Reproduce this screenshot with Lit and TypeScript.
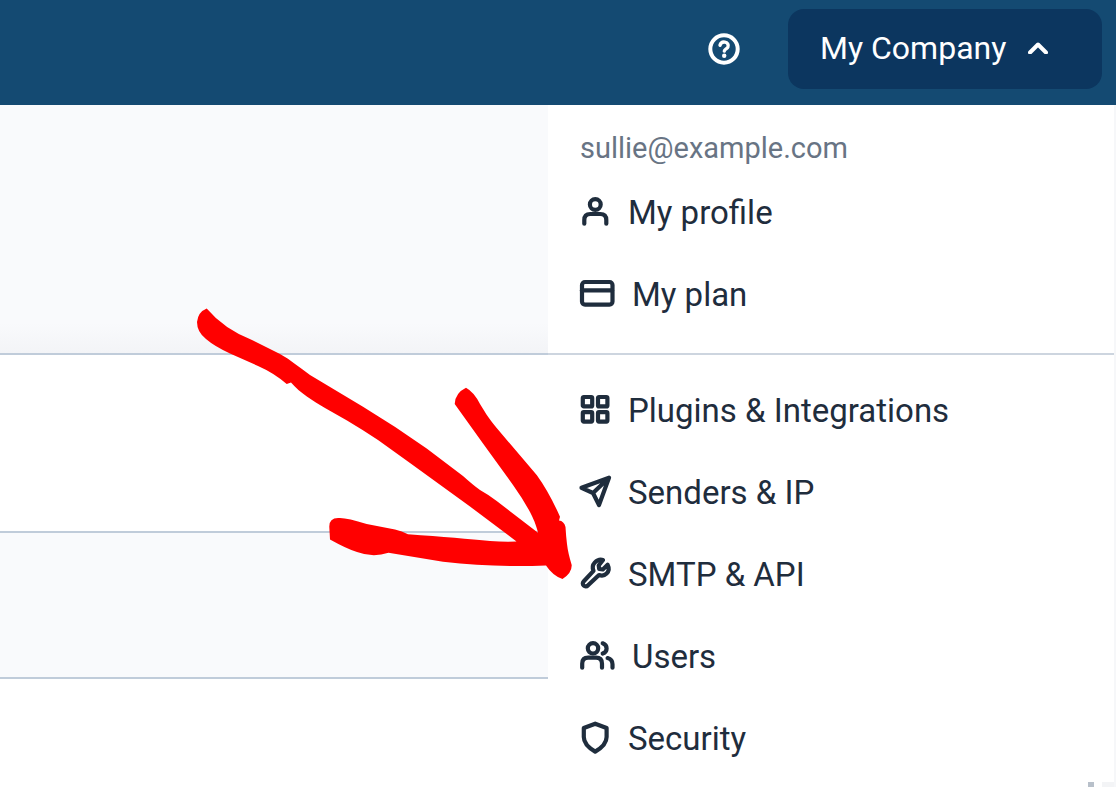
import { LitElement, html, css, svg } from "lit";
import { customElement, property } from "lit/decorators.js";

type IconName = "user" | "card" | "grid" | "send" | "wrench" | "users" | "shield";

const glyphs: Record<IconName, { width: number; shape: unknown }> = {
  user: {
    width: 30,
    shape: svg`<circle cx="15.300" cy="7.500" r="5.400"/><path d="M4.300 26.700v-3.700q0-6 6-6h10q6 0 6 6v3.700"/>`,
  },
  card: {
    width: 34,
    shape: svg`<rect x="2" y="3" width="30.500" height="22.600" rx="3"/><path d="M2 11.300h30"/>`,
  },
  grid: {
    width: 30,
    shape: svg`<rect x="2.800" y="2" width="9.400" height="9.400" rx="1"/><rect x="18" y="2" width="9.400" height="9.400" rx="1"/><rect x="2.800" y="17.200" width="9.400" height="9.400" rx="1"/><rect x="18" y="17.200" width="9.400" height="9.400" rx="1"/>`,
  },
  send: {
    width: 30,
    shape: svg`<path d="M29 .800 1.500 10.800l11.500 5.200 6 12zM29 .800 13 16"/>`,
  },
  wrench: {
    width: 30,
    shape: svg`<path d="m23 1-4.300 5.500.500 3.500 3.600.400 4.800-4.600c1.900 3.800 1.100 6.800-1 8.800-2.300 2.200-5 2.300-7.600 1.400L7.800 26.500a2.800 2.800 0 0 1-4.200-4l9.900-10.600c-1.200-2.900-.900-6 1.200-8.300 2.200-2.300 5-3.500 8.300-2.600z"/>`,
  },
  users: {
    width: 34,
    shape: svg`<circle cx="13" cy="7.300" r="5.200"/><path d="M2.200 26.700v-4q0-6 6-6h7.800q6 0 6 6v4M22.700 2.300q3.900 1.400 3.900 5.100t-3.900 5.100M27.600 17.100q4.900 1.400 4.900 6.200v3.400"/>`,
  },
  shield: {
    width: 30,
    shape: svg`<path d="M15.200 .700 26.600 5v9c0 6.500-5 10.900-11.400 14.600C8.800 24.900 3.800 20.500 3.800 14v-9z"/>`,
  },
};

@customElement("menu-link")
export class MenuLink extends LitElement {
  @property() icon: IconName = "user";
  @property() label = "";

  static styles = css`
    :host {
      display: block;
    }
    .link {
      display: flex;
      align-items: center;
      gap: 18px;
      height: 82px;
      color: #1f2d3d;
      font-size: 33px;
      line-height: 40px;
      text-decoration: none;
      white-space: nowrap;
    }
    .icon {
      flex: none;
      overflow: visible;
      fill: none;
      stroke: currentColor;
      stroke-width: 4.2;
      stroke-linecap: round;
      stroke-linejoin: round;
    }
  `;

  render() {
    const glyph = glyphs[this.icon];
    return html`<a class="link" href="#">
      <svg class="icon" width=${glyph.width} height="32" aria-hidden="true">${glyph.shape}</svg>
      <span>${this.label}</span>
    </a>`;
  }
}

@customElement("app-root")
export class AppRoot extends LitElement {
  static styles = css`
    :host {
      display: flex;
      flex-direction: column;
      position: relative;
      min-height: 100vh;
      overflow: hidden;
      background: #fff;
      font-family: Roboto, sans-serif;
    }
    .bar {
      display: flex;
      align-items: flex-start;
      justify-content: flex-end;
      gap: 48px;
      box-sizing: border-box;
      height: 105px;
      padding: 9px 14px;
      background: #144a72;
    }
    button {
      font: inherit;
      color: #fff;
      border: 0;
      padding: 0;
      background: none;
    }
    .help {
      height: 80px;
      display: flex;
      align-items: center;
    }
    .company {
      display: flex;
      align-items: center;
      justify-content: space-between;
      box-sizing: border-box;
      width: 314px;
      height: 80px;
      padding: 0 54px 2px 32px;
      border-radius: 16px;
      background: #0c365f;
      font-size: 32px;
      line-height: 40px;
    }
    .stroke {
      fill: none;
      stroke: currentColor;
      stroke-width: 4;
      stroke-linecap: round;
      stroke-linejoin: round;
    }
    .hook {
      stroke-width: 3.4;
    }
    .body {
      flex: 1;
      display: grid;
      grid-template-columns: minmax(0, 548fr) minmax(0, 568fr);
    }
    .page {
      display: grid;
      grid-template-rows: 250px 178px 146px 1fr;
    }
    .band {
      border-bottom: 2px solid #c0ccda;
    }
    .tinted {
      background: #f9fafc;
    }
    .shaded {
      background: linear-gradient(#f9fafc 88%, #f3f4f7);
    }
    .menu {
      display: flex;
      flex-direction: column;
      border-right: 2px solid #f6f7f9;
    }
    .group {
      padding: 0 32px;
    }
    .account {
      padding-top: 25px;
      padding-bottom: 17px;
      border-bottom: 2px solid #cdd5df;
    }
    .settings {
      flex: 1;
      padding-top: 15px;
    }
    .email {
      margin: 0;
      padding-bottom: 6px;
      color: #687484;
      font-size: 29px;
      line-height: 36px;
    }
    .edge {
      display: flex;
      justify-content: flex-end;
      gap: 8px;
      height: 5px;
    }
    .mark {
      width: 6px;
      background: #b8c0ca;
    }
    .track {
      width: 12px;
      background: #f3f4f6;
    }
    .arrow {
      position: absolute;
      top: 0;
      left: 0;
      fill: #f00;
      pointer-events: none;
    }
  `;

  render() {
    return html`
      <header class="bar">
        <button class="help" aria-label="Help">
          <svg width="32" height="32" aria-hidden="true">
            <circle class="stroke" cx="16" cy="16" r="13.700" />
            <path class="stroke hook" d="M12 12.300C12.700 9.700 14.700 8.800 16.800 9.100c2.700.400 4.100 2.700 3.100 5-.8 1.800-3.400 2.100-3.600 4" />
            <circle cx="16.200" cy="22.700" r="2.200" fill="currentColor" />
          </svg>
        </button>
        <button class="company" aria-expanded="true">
          <span>My Company</span>
          <svg width="20" height="12" aria-hidden="true"><path class="stroke" d="m2 10.500 8-8 8 8" /></svg>
        </button>
      </header>
      <main class="body">
        <div class="page">
          <div class="band shaded"></div>
          <div class="band"></div>
          <div class="band tinted"></div>
        </div>
        <nav class="menu" aria-label="Account">
          <div class="group account">
            <p class="email">sullie@example.com</p>
            <menu-link icon="user" label="My profile"></menu-link>
            <menu-link icon="card" label="My plan"></menu-link>
          </div>
          <div class="group settings">
            <menu-link icon="grid" label="Plugins &amp; Integrations"></menu-link>
            <menu-link icon="send" label="Senders &amp; IP"></menu-link>
            <menu-link icon="wrench" label="SMTP &amp; API"></menu-link>
            <menu-link icon="users" label="Users"></menu-link>
            <menu-link icon="shield" label="Security"></menu-link>
          </div>
          <div class="edge"><span class="mark"></span><span class="track"></span></div>
        </nav>
      </main>
      <svg class="arrow" width="600" height="600" aria-hidden="true">
        <path d="M206.700 308.500Q224 329 252 340L280 354C291 360 300 368 310 375L363 406.700Q395 426 426.700 448.500L463 476Q473 485 480 490Q489 495 496.700 501L538 532.700C536 524 533 518 530 512Q523 499 513 485L483 443.500L454.700 404Q455 393 466 387.700Q474 392 480 404C486 414 490 420 496.700 428L536.700 475Q549 492 560 516.700L559 520.500Q564 521 565.500 527Q566 536 567 544Q568 553 571.700 565Q572 573 562.500 579Q553 576 546 565.500C510 567 478 565.500 443 561.700L388.500 552.700Q373 558 357 552Q347 549 330 539.500L329.300 527Q329 517 340 518Q348 518 366.700 524L395 529.500Q402 531 408 534.200Q460 538 490 541Q504 542 516.500 541.500L470 506.500L410 463L378 440Q363 430 347 420.500L325 408C313 401 300 393 291 382.500L286.700 384Q274 373 258 366L230 353.500Q214 346 206 339Q197 332 197 322Q198 312 206.700 308.500Z" />
      </svg>
    `;
  }
}
